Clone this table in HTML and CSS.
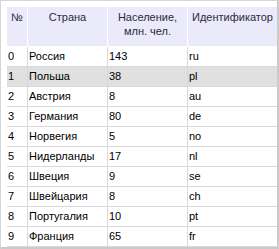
FILE: index.html
```html
<!DOCTYPE html>
<html>
<head>
<meta charset="utf-8">
<link rel="stylesheet" href="styles.css">
</head>
<body>
<div class="frame">
  <div class="grid">
    <div class="hc">№</div>
    <div class="hc">Страна</div>
    <div class="hc">Население,<br>млн. чел.</div>
    <div class="hc last">Идентификатор</div>

    <div class="c">0</div><div class="c">Россия</div><div class="c">143</div><div class="c last">ru</div>
    <div class="c sel">1</div><div class="c sel">Польша</div><div class="c sel">38</div><div class="c sel last">pl</div>
    <div class="c">2</div><div class="c">Австрия</div><div class="c">8</div><div class="c last">au</div>
    <div class="c">3</div><div class="c">Германия</div><div class="c">80</div><div class="c last">de</div>
    <div class="c">4</div><div class="c">Норвегия</div><div class="c">5</div><div class="c last">no</div>
    <div class="c">5</div><div class="c">Нидерланды</div><div class="c">17</div><div class="c last">nl</div>
    <div class="c">6</div><div class="c">Швеция</div><div class="c">9</div><div class="c last">se</div>
    <div class="c">7</div><div class="c">Швейцария</div><div class="c">8</div><div class="c last">ch</div>
    <div class="c">8</div><div class="c">Португалия</div><div class="c">10</div><div class="c last">pt</div>
    <div class="c">9</div><div class="c">Франция</div><div class="c">65</div><div class="c last">fr</div>
  </div>
</div>
</body>
</html>
```
FILE: styles.css
```css
html, body {
  margin: 0;
  padding: 0;
  background: #fff;
}
.frame {
  box-sizing: border-box;
  width: 279px;
  height: 249px;
  border-left: 1px solid #d6d6d6;
  border-top: 1px solid #d6d6d6;
  border-right: 2px solid #cacaca;
  border-bottom: 2px solid #cacaca;
  padding: 6px 0 0 6px;
  overflow: hidden;
  font-family: "Liberation Sans", Arial, sans-serif;
  font-size: 11px;
  color: #000;
}
.grid {
  display: grid;
  grid-template-columns: 21px 80px 80px 89px;
  grid-template-rows: 40px repeat(10, 20px);
}
.hc {
  box-sizing: border-box;
  background: #eaeafa;
  border-right: 1px solid #ffffff;
  border-bottom: 1px solid #ffffff;
  text-align: center;
  line-height: 14px;
  padding-top: 3px;
  color: #2a2a3a;
  white-space: nowrap;
  overflow: hidden;
}
.c {
  box-sizing: border-box;
  border-right: 1px solid #d9d9d9;
  border-bottom: 1px solid #d9d9d9;
  line-height: 19px;
  padding-left: 1px;
  white-space: nowrap;
  overflow: hidden;
}
.last {
  border-right: none;
}
.sel {
  background: #e0e0e0;
}
```
